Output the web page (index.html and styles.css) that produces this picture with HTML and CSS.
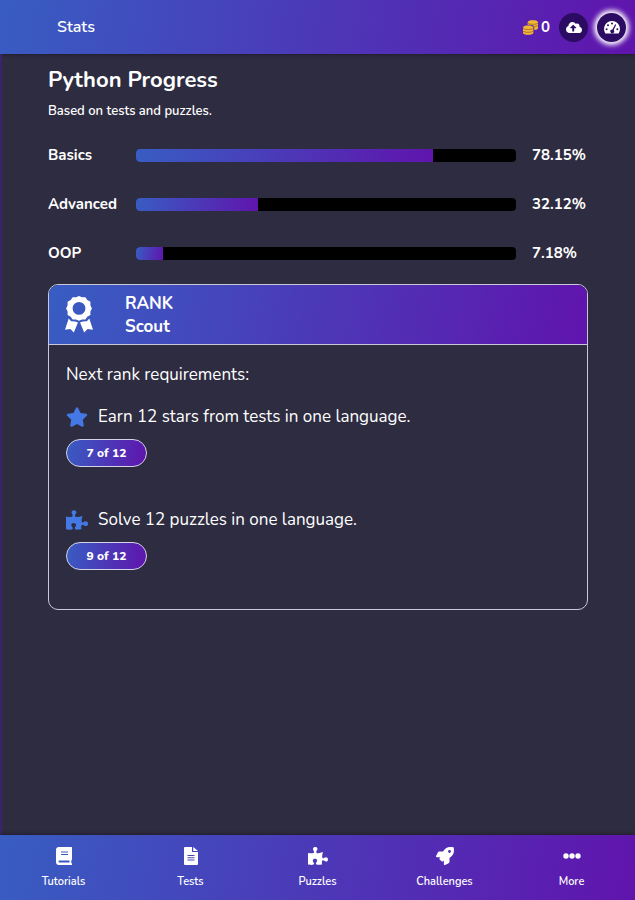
FILE: index.html
```html
<!DOCTYPE html>
<html lang="en">
<head>
    <meta charset="UTF-8">
    <meta name="viewport" content="width=device-width, initial-scale=1.0">
    <title>Stats</title>
    <link rel="stylesheet" href="styles.css">
</head>
<body>
    <svg class="sprite" aria-hidden="true">
        <symbol id="puzzle" viewBox="0 0 576 512">
            <path d="M519.442 288.651c-41.519 0-59.5 31.593-82.058 31.593C377.409 320.244 432 144 432 144s-196.288 80-196.288-3.297c0-35.827 36.288-46.25 36.288-85.985C272 19.216 243.885 0 210.539 0c-34.654 0-66.366 18.891-66.366 56.346 0 41.364 31.711 59.277 31.711 81.75C175.885 207.719 0 166.758 0 166.758v333.237s178.635 41.047 178.635-28.662c0-22.473-40-40.107-40-81.471 0-37.456 29.25-56.346 63.577-56.346 33.673 0 61.788 19.216 61.788 54.717 0 39.735-36.288 50.158-36.288 85.985 0 60.803 129.675 25.73 181.23 25.73 0 0-34.725-120.101 25.827-120.101 35.962 0 46.423 36.152 86.308 36.152C556.712 416 576 387.99 576 354.443c0-34.199-18.962-65.792-56.558-65.792z"/>
        </symbol>
    </svg>

    <header class="topbar">
        <h1 class="topbar-title">Stats</h1>
        <div class="coins">
            <svg class="coins-icon" viewBox="0 0 16 16" aria-hidden="true">
                <path d="M5 2.500C5 1 7.500.300 10.500.300S16 1 16 2.500v6c0 1.200-1.500 2-4 2.200V7.500C12 5.500 9 4.700 5 5z"/>
                <path d="M0 8c0-1.500 2.500-2.200 5.500-2.200S11 6.500 11 8v5.500c0 1.500-2.500 2.200-5.500 2.200S0 15 0 13.500z"/>
                <path class="coin-line" d="M5 3.500c2 1.500 9 1.500 11 0M11 6.900c2 0 4-.400 5-1.200M0 9c2 1.500 9 1.500 11 0M0 12c2 1.500 9 1.500 11 0"/>
            </svg>
            <span>0</span>
        </div>
        <button class="round-button" type="button" aria-label="Upload">
            <svg class="round-icon" viewBox="0 0 640 512" aria-hidden="true">
                <path d="M537.6 226.6c4.1-10.7 6.4-22.4 6.4-34.6 0-53-43-96-96-96-19.7 0-38.1 6-53.3 16.2C367 64.2 315.3 32 256 32c-88.4 0-160 71.6-160 160 0 2.7.1 5.4.2 8.1C40.2 219.8 0 273.2 0 336c0 79.5 64.5 144 144 144h368c70.7 0 128-57.3 128-128 0-61.9-44-113.6-102.4-125.4zM393.4 288H328v112c0 8.8-7.2 16-16 16h-48c-8.8 0-16-7.2-16-16V288h-65.4c-14.3 0-21.4-17.2-11.3-27.3l105.4-105.4c6.2-6.2 16.4-6.2 22.6 0l105.4 105.4c10.1 10.1 2.9 27.3-11.3 27.3z"/>
            </svg>
        </button>
        <button class="round-button active" type="button" aria-label="Stats">
            <svg class="round-icon" viewBox="0 0 16 13" aria-hidden="true">
                <path d="M8 0a8 8 0 0 0-6.900 12q.300.600 1 .600h11.800q.700 0 1-.600A8 8 0 0 0 8 0z"/>
                <g class="gauge-marks">
                    <circle cx="8" cy="2.500" r="1"/>
                    <circle cx="4" cy="4.300" r="1"/>
                    <circle cx="2.600" cy="8.300" r="1"/>
                    <circle cx="13.400" cy="8.300" r="1"/>
                    <path d="M11.200 3.200l1 .500-2.500 5.300a2 2 0 1 1-1.300-.600z"/>
                </g>
            </svg>
        </button>
    </header>

    <main class="content">
        <h2 class="heading">Python Progress</h2>
        <p class="subtitle">Based on tests and puzzles.</p>

        <div class="progress-list">
            <div class="progress-row">
                <label for="basics">Basics</label>
                <progress id="basics" max="100" value="78.15"></progress>
                <span>78.15%</span>
            </div>
            <div class="progress-row">
                <label for="advanced">Advanced</label>
                <progress id="advanced" max="100" value="32.12"></progress>
                <span>32.12%</span>
            </div>
            <div class="progress-row">
                <label for="oop">OOP</label>
                <progress id="oop" max="100" value="7.18"></progress>
                <span>7.18%</span>
            </div>
        </div>

        <section class="card">
            <div class="card-header">
                <svg class="award-icon" viewBox="0 0 28 37" aria-hidden="true">
                    <path fill-rule="evenodd" d="M14 0l3 1.300 3.400 0 1.900 2.700 3.100 1.700 0 3.500 1.500 3.200-1.500 3.200 0 3.500-3.100 1.700-1.900 2.700-3.400 0-3 1.300-3-1.300-3.400 0-1.900-2.700-3.100-1.700 0-3.500-1.500-3.200 1.500-3.200 0-3.500 3.100-1.700 1.900-2.700 3.400 0zM14 6a6.400 6.400 0 1 0 0 12.800 6.400 6.400 0 1 0 0-12.800z"/>
                    <path d="M3.700 22.600l2.400 2.700 4.200.200 2.700 1.100-4.200 9.900-3.400-3.400-5.400.700z"/>
                    <path d="M24.300 22.600l-2.400 2.700-4.200.200-2.700 1.100 4.200 9.900 3.400-3.400 5.400.700z"/>
                </svg>
                <div class="rank">
                    <div>RANK</div>
                    <div>Scout</div>
                </div>
            </div>
            <div class="card-body">
                <p class="intro">Next rank requirements:</p>
                <div class="requirement">
                    <p class="requirement-text">
                        <svg class="requirement-icon" viewBox="0 0 576 512" aria-hidden="true">
                            <path d="M259.3 17.8L194 150.2 47.9 171.5c-26.2 3.8-36.7 36.1-17.7 54.6l105.7 103-25 145.5c-4.5 26.3 23.2 46 46.4 33.7L288 439.6l130.7 68.7c23.2 12.2 50.9-7.4 46.4-33.7l-25-145.5 105.7-103c19-18.5 8.5-50.8-17.7-54.6L382 150.2 316.7 17.8c-11.7-23.6-45.6-23.9-57.4 0z"/>
                        </svg>
                        Earn 12 stars from tests in one language.
                    </p>
                    <span class="badge">7 of 12</span>
                </div>
                <div class="requirement">
                    <p class="requirement-text">
                        <svg class="requirement-icon" aria-hidden="true"><use href="#puzzle"/></svg>
                        Solve 12 puzzles in one language.
                    </p>
                    <span class="badge">9 of 12</span>
                </div>
            </div>
        </section>
    </main>

    <nav class="tabs">
        <a class="tab" href="#tutorials">
            <svg class="tab-icon" viewBox="0 0 18 18" aria-hidden="true">
                <path fill-rule="evenodd" d="M4 0h12.500q.500 0 .500.500v12l-.700 1v2.500l.700.500V18H4a3 3 0 0 1-3-3V3a3 3 0 0 1 3-3zM6 4.500v1h7v-1zM6 7v1h7V7zM4.500 13.500q-1 0-1 1t1 1H14.500v-2z"/>
            </svg>
            Tutorials
        </a>
        <a class="tab" href="#tests">
            <svg class="tab-icon" viewBox="0 0 18 18" aria-hidden="true">
                <path fill-rule="evenodd" d="M3 0h7v4.500q0 .500.500.500H16v12q0 1-1 1H3q-1 0-1-1V1q0-1 1-1zM5.500 8v1h7V8zM5.500 10.300v1h7v-1zM5.500 12.600v1h7v-1z"/>
                <path d="M11.200 0L16 4h-4.800z"/>
            </svg>
            Tests
        </a>
        <a class="tab" href="#puzzles">
            <svg class="tab-icon" aria-hidden="true"><use href="#puzzle"/></svg>
            Puzzles
        </a>
        <a class="tab" href="#challenges">
            <svg class="tab-icon" viewBox="0 0 512 512" aria-hidden="true">
                <path d="M505.120 19.094c-1.189-5.531-6.658-11-12.207-12.188C460.716 0 435.507 0 410.407 0 307.175 0 245.269 55.203 199.052 128H94.838c-16.348.016-35.557 11.875-42.887 26.484L2.516 253.297A28.400 28.400 0 0 0 0 264a24 24 0 0 0 24 24h103.816l-22.475 22.469c-11.365 11.361-12.996 32.258 0 45.250L156.246 406.625c11.156 11.188 32.156 13.156 45.277 0l22.475-22.469V488a24 24 0 0 0 24 24 28.600 28.600 0 0 0 10.707-2.516l98.728-49.390c14.629-7.297 26.508-26.500 26.508-42.860V312.797c72.598-46.313 128.035-108.406 128.035-211.094.1-25.203.1-50.406-6.856-82.609zM384.040 168A40 40 0 1 1 424 128a40 40 0 0 1-39.960 40z"/>
            </svg>
            Challenges
        </a>
        <a class="tab" href="#more">
            <svg class="tab-icon" viewBox="0 0 18 18" aria-hidden="true">
                <circle cx="3" cy="9" r="2.700"/>
                <circle cx="9" cy="9" r="2.700"/>
                <circle cx="15" cy="9" r="2.700"/>
            </svg>
            More
        </a>
    </nav>
</body>
</html>
```
FILE: styles.css
```css
* {
    box-sizing: border-box;
}

body {
    display: flex;
    flex-direction: column;
    min-height: 100vh;
    margin: 0;
    background-color: #2e2c40;
    color: #fff;
    font-family: Nunito, Lato, sans-serif;
}

h1, h2, p {
    margin: 0;
}

svg {
    fill: currentColor;
}

.sprite {
    display: none;
}

.topbar,
.card-header,
.tabs {
    background: linear-gradient(100deg, #385dc2, #6014ad);
}

.topbar {
    display: flex;
    align-items: center;
    gap: 9px;
    height: 54px;
    padding: 0 9px 0 57px;
    box-shadow: 0 1px 3px #1e1c2c;
}

.topbar-title {
    flex: 1;
    font-size: 16px;
    font-weight: 600;
}

.coins {
    display: flex;
    align-items: center;
    gap: 3px;
    font-size: 15px;
    font-weight: bold;
}

.coins-icon {
    width: 15px;
    height: 15px;
    color: #f3b735;
}

.coin-line {
    fill: none;
    stroke: #a8712a;
}

.round-button {
    display: flex;
    align-items: center;
    justify-content: center;
    width: 29px;
    height: 29px;
    padding: 0;
    border: none;
    border-radius: 50%;
    background-color: #2c0b63;
    color: #fff;
    cursor: pointer;
}

.round-button.active {
    box-shadow: 0 0 5px 3px #fff;
}

.round-icon {
    width: 16px;
    height: 13px;
}

.gauge-marks {
    fill: #2c0b63;
}

.content {
    flex: 1;
    padding: 12px 47px 24px 46px;
    border-left: 2px solid #3c2268;
}

.heading {
    font-size: 22px;
    line-height: 28px;
}

.subtitle {
    margin-top: 8px;
    font-size: 13px;
    font-weight: 600;
    line-height: 18px;
}

.progress-list {
    display: grid;
    gap: 25px;
    margin-top: 23px;
}

.progress-row {
    display: grid;
    grid-template-columns: 72px 1fr 56px;
    align-items: center;
    gap: 16px;
    font-size: 15px;
    font-weight: bold;
    line-height: 24px;
}

progress {
    appearance: none;
    width: 100%;
    height: 13px;
    border: none;
    border-radius: 4px;
    overflow: hidden;
}

progress::-webkit-progress-bar {
    background-color: #000;
}

progress::-webkit-progress-value {
    background: linear-gradient(100deg, #385dc2, #6014ad);
}

.card {
    margin-top: 19px;
    border: 1px solid #c9c8d6;
    border-radius: 10px;
    overflow: hidden;
}

.card-header {
    display: flex;
    align-items: center;
    gap: 32px;
    height: 60px;
    padding: 0 16px;
    border-bottom: 1px solid #c9c8d6;
}

.award-icon {
    width: 28px;
    height: 37px;
}

.rank {
    font-size: 17px;
    font-weight: bold;
    line-height: 23px;
}

.card-body {
    padding: 18px 17px 17px;
}

.intro {
    font-size: 17px;
    line-height: 24px;
}

.requirement {
    margin: 16px 0 39px;
}

.requirement:last-child {
    margin-bottom: 22px;
}

.requirement-text {
    display: flex;
    align-items: center;
    gap: 10px;
    margin-bottom: 8px;
    font-size: 17px;
    line-height: 28px;
}

.requirement-icon {
    width: 22px;
    height: 20px;
    color: #4478e5;
}

.badge {
    display: block;
    width: 81px;
    border: 1px solid #d5d3e6;
    border-radius: 14px;
    background: linear-gradient(100deg, #385dc2, #6014ad);
    font-size: 12px;
    font-weight: 800;
    line-height: 26px;
    text-align: center;
}

.tabs {
    display: grid;
    grid-template-columns: repeat(5, 1fr);
    height: 65px;
    box-shadow: 0 -1px 3px #1e1c2c;
}

.tab {
    display: flex;
    flex-direction: column;
    align-items: center;
    gap: 8px;
    padding-top: 12px;
    color: #fff;
    font-size: 11px;
    font-weight: 600;
    line-height: 18px;
    text-decoration: none;
}

.tab-icon {
    width: 20px;
    height: 18px;
}
```
